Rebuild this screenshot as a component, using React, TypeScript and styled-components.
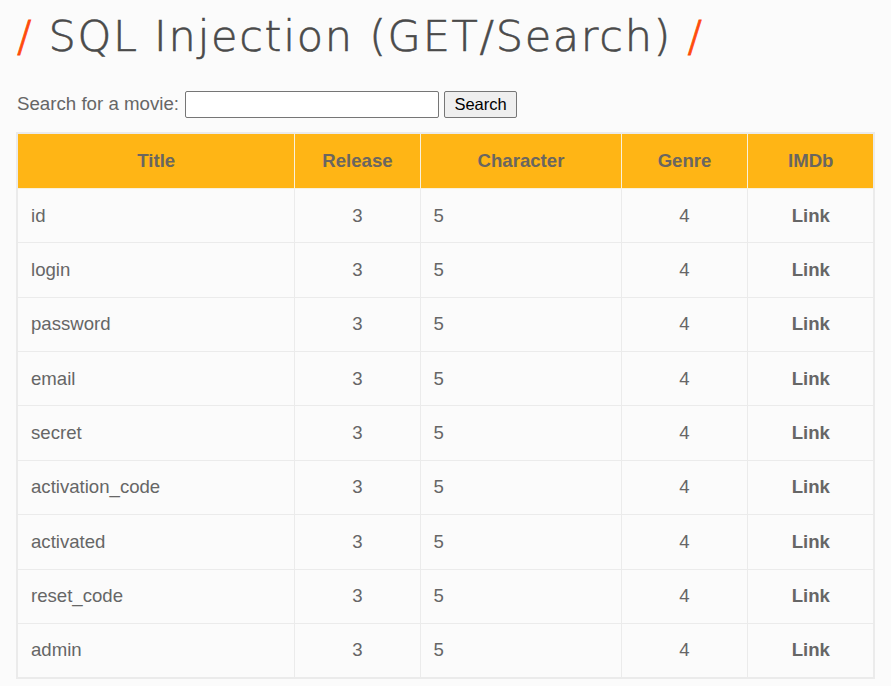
import React from "react";
import styled, { createGlobalStyle } from "styled-components";

const Global = createGlobalStyle`
  html, body { margin: 0; padding: 0; background: #fbfbfb; }
  body { font-family: "Liberation Sans", Arial, sans-serif; color: #666; overflow: hidden; }
`;

const Page = styled.main`
  width: 891px;
  height: 686px;
  padding: 0 17px;
  box-sizing: border-box;
  overflow: hidden;
`;

const Heading = styled.h1`
  margin: 0;
  height: 91px;
  padding-top: 8px;
  box-sizing: border-box;
  font-family: "DejaVu Sans", sans-serif;
  font-weight: 200;
  font-size: 43px;
  line-height: 56px;
  letter-spacing: 1.7px;
  -webkit-text-stroke: 0.6px #4a4a4a;
  color: #4a4a4a;
  white-space: nowrap;
`;

const Slash = styled.span`
  color: #ff4a0a;
  -webkit-text-stroke: 0.8px #ff4a0a;
`;

const SearchForm = styled.form`
  display: flex;
  align-items: center;
  height: 27px;
  margin-bottom: 14px;
  font-size: 18.7px;
`;

const SearchLabel = styled.label`
  margin-right: 6px;
  padding-bottom: 2px;
`;

const SearchInput = styled.input`
  width: 254px;
  height: 27px;
  box-sizing: border-box;
  margin: 0 5px 0 0;
  border: 1px solid #767676;
  border-radius: 2px;
  background: #fff;
`;

const SearchButton = styled.button`
  width: 73px;
  height: 27px;
  padding: 0;
  box-sizing: border-box;
  border: 1px solid #767676;
  border-radius: 2px;
  background: #efefef;
  color: #000;
  font-family: "Liberation Sans", Arial, sans-serif;
  font-size: 16.5px;
`;

const Table = styled.table`
  width: 857px;
  margin-left: -1px;
  table-layout: fixed;
  border-collapse: collapse;
  border: 2px solid #ebebeb;
  font-size: 18.6px;
`;

const HeadCell = styled.th`
  height: 54px;
  padding: 0 0 0 1px;
  background: #ffb515;
  border: 1px solid #f8f1dc;
  font-weight: 700;
  color: #6a6660;
  text-align: center;
`;

const Cell = styled.td<{ $center?: boolean; $bold?: boolean }>`
  height: 54.36px;
  padding: 0 13px 0 ${(p) => (p.$center ? 14 : 13)}px;
  box-sizing: border-box;
  border: 1px solid #ebebeb;
  text-align: ${(p) => (p.$center ? "center" : "left")};
  font-weight: ${(p) => (p.$bold ? 700 : 400)};
`;

const columns = [277, 126, 201, 126, 127];
const rows = ["id", "login", "password", "email", "secret", "activation_code", "activated", "reset_code", "admin"];

export default function App() {
  return (
    <Page>
      <Global />
      <Heading>
        <Slash>/</Slash> SQL Injection (GET/Search) <Slash>/</Slash>
      </Heading>
      <SearchForm onSubmit={(e) => e.preventDefault()}>
        <SearchLabel htmlFor="title">Search for a movie:</SearchLabel>
        <SearchInput id="title" type="text" />
        <SearchButton type="submit">Search</SearchButton>
      </SearchForm>
      <Table>
        <colgroup>
          {columns.map((w, i) => (
            <col key={i} style={{ width: w }} />
          ))}
        </colgroup>
        <thead>
          <tr>
            {["Title", "Release", "Character", "Genre", "IMDb"].map((h) => (
              <HeadCell key={h}>{h}</HeadCell>
            ))}
          </tr>
        </thead>
        <tbody>
          {rows.map((r) => (
            <tr key={r}>
              <Cell>{r}</Cell>
              <Cell $center>3</Cell>
              <Cell>5</Cell>
              <Cell $center>4</Cell>
              <Cell $center $bold>Link</Cell>
            </tr>
          ))}
        </tbody>
      </Table>
    </Page>
  );
}
